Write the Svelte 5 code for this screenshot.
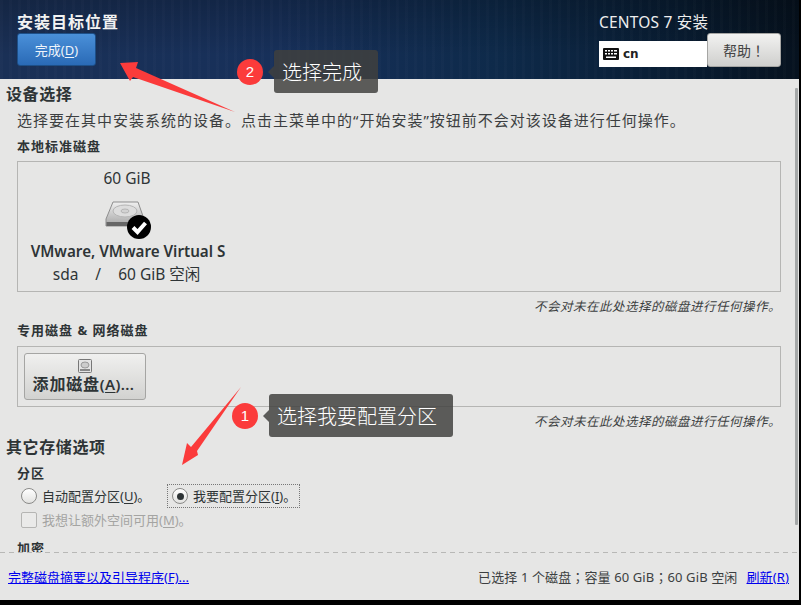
<script>
  const note = '不会对未在此处选择的磁盘进行任何操作。';
</script>

<div class="screen">
  <header class="top">
    <div class="top-left">
      <h1>安装目标位置</h1>
      <button class="done">完成(<u>D</u>)</button>
    </div>
    <div class="top-right">
      <div class="product">CENTOS 7 安装</div>
      <div class="kb-row">
        <div class="kb">
          <svg width="16" height="12" viewBox="0 0 16 12"><rect width="16" height="12" rx="1" fill="#111"/><g fill="#fff"><rect x="2" y="2" width="2" height="1.500"/><rect x="5" y="2" width="2" height="1.500"/><rect x="8" y="2" width="2" height="1.500"/><rect x="11" y="2" width="3" height="1.500"/><rect x="2" y="5" width="2" height="1.500"/><rect x="5" y="5" width="2" height="1.500"/><rect x="8" y="5" width="2" height="1.500"/><rect x="11" y="5" width="3" height="1.500"/><rect x="3" y="8.500" width="10" height="1.500"/></g></svg>
          <b>cn</b>
        </div>
        <button class="help">帮助！</button>
      </div>
    </div>
  </header>

  <main class="body">
    <h2 class="sec first">设备选择</h2>
    <div class="inner">
      <p class="intro">选择要在其中安装系统的设备。点击主菜单中的“开始安装”按钮前不会对该设备进行任何操作。</p>
      <h3 class="local">本地标准磁盘</h3>
      <div class="box disks">
        <div class="disk">
          <div class="size">60 GiB</div>
          <div class="disk-icon">
            <svg width="50" height="42" viewBox="0 0 50 42">
              <defs><linearGradient id="hd" x1="0" y1="0" x2="0" y2="1"><stop offset="0" stop-color="#f0f0f0"/><stop offset="1" stop-color="#a5a5a5"/></linearGradient></defs>
              <path d="M9 3H34L40 20V27H2V20Z" fill="url(#hd)" stroke="#8d8d8d"/>
              <ellipse cx="21" cy="12" rx="12" ry="6" fill="#ddd" stroke="#b5b5b5"/>
              <ellipse cx="21" cy="12" rx="4" ry="2" fill="#d2d2d2" stroke="#b5b5b5"/>
              <rect x="2.500" y="23" width="37" height="4" fill="#666"/>
              <circle cx="35" cy="28" r="12" fill="#000"/>
              <path d="M29 28.500L33.500 33 41.500 24" fill="none" stroke="#fff" stroke-width="4"/>
            </svg>
          </div>
          <div class="model">VMware, VMware Virtual S</div>
          <div class="meta"><span>sda</span><span>/</span><span>60 GiB 空闲</span></div>
        </div>
      </div>
      <p class="note">{note}</p>
      <h3 class="special">专用磁盘 &amp; 网络磁盘</h3>
      <div class="box add-box">
        <button class="add">
          <svg width="14" height="14" viewBox="0 0 14 14"><rect x=".5" y=".5" width="13" height="13" rx="1" fill="#e4e4e4" stroke="#777"/><ellipse cx="7" cy="6" rx="4" ry="3" fill="#ccc" stroke="#999"/><rect x="2" y="10" width="10" height="2" fill="#888"/></svg>
          <span class="add-label">添加磁盘<small>(<u>A</u>)...</small></span>
        </button>
      </div>
      <p class="note second">{note}</p>
    </div>
    <h2 class="sec other">其它存储选项</h2>
    <div class="inner">
      <h3 class="part">分区</h3>
      <div class="radios">
        <label class="radio"><i class="dot"></i>自动配置分区(<u>U</u>)。</label>
        <label class="radio picked"><i class="dot on"></i>我要配置分区(<u>I</u>)。</label>
      </div>
      <label class="check"><i class="cb"></i>我想让额外空间可用(<u>M</u>)。</label>
      <h3 class="enc">加密</h3>
    </div>
  </main>

  <footer class="foot">
    <a href="#a">完整磁盘摘要以及引导程序(F)...</a>
    <div class="summary">
      <span>已选择 1 个磁盘；容量 60 GiB；60 GiB 空闲</span>
      <a href="#b">刷新(R)</a>
    </div>
  </footer>

  <i class="scroll"></i>

  <svg class="arrows" width="801" height="605" viewBox="0 0 801 605">
    <path d="M120 63 L138 62 L136 68 L235 112 L133 77 L130 81Z" fill="#fb3b3b"/>
    <path d="M241 387 L197 451 L198 455 L182 465 L187 443 L191 447Z" fill="#fb3b3b"/>
  </svg>

  <div class="tip tip-two"><span class="num">2</span><span class="label">选择完成</span></div>
  <div class="tip tip-one"><span class="num">1</span><span class="label">选择我要配置分区</span></div>
</div>

<style>
  :global(body) { margin: 0; background: #000; }
  .screen {
    position: relative;
    width: 799px;
    height: 600px;
    background: #e6e6e5;
    display: flex;
    flex-direction: column;
    overflow: hidden;
    font-family: "Noto Sans", "Noto Sans CJK SC", sans-serif;
    color: #2e3436;
    font-size: 13px;
  }
  h1, h2, h3, p { margin: 0; }
  u { text-underline-offset: 2px; }
  button { font-family: inherit; padding: 0; cursor: default; }

  .top {
    height: 79px;
    flex: none;
    box-sizing: border-box;
    padding: 12px 18px 0 17px;
    display: flex;
    justify-content: space-between;
    background:
      repeating-linear-gradient(90deg, rgba(255, 255, 255, 0.015) 0 3px, transparent 3px 9px),
      linear-gradient(rgba(0, 0, 0, 0.22), rgba(0, 0, 0, 0) 70%),
      linear-gradient(90deg, #1a3056 0%, #17305a 35%, #0e2a4a 62%, #091d33 85%, #06121f 100%);
  }
  h1 { font-size: 16px; line-height: 20px; font-weight: 700; color: #f2f2f2; letter-spacing: 1px; }
  .done {
    display: block;
    width: 79px;
    height: 33px;
    margin-top: 1px;
    border: 1px solid #1d4f88;
    border-radius: 3px;
    background: linear-gradient(#4a90d9, #2a6ab6);
    color: #eef4fb;
    font-size: 13px;
  }
  .top-right { width: 182px; }
  .product { font-size: 15.500px; letter-spacing: 0.2px; line-height: 20px; color: #eee; }
  .kb-row { display: flex; margin-top: 9px; align-items: flex-start; }
  .kb {
    width: 108px;
    height: 26px;
    background: #fff;
    display: flex;
    align-items: center;
    gap: 4px;
    padding-left: 4px;
    box-sizing: border-box;
    color: #222;
    font-size: 12px;
    font-family: "DejaVu Sans", sans-serif;
  }
  .help {
    width: 74px;
    height: 34px;
    margin-top: -8px;
    border: 1px solid #a5a5a3;
    border-radius: 3px;
    background: linear-gradient(#f2f2f1, #cfcfcd);
    color: #444;
    font-size: 14px;
    font-family: "Noto Sans CJK TC", sans-serif;
  }

  .body { flex: 1; min-height: 0; overflow: hidden; padding-top: 4px; }
  .sec { font-size: 16px; line-height: 22px; font-weight: 700; padding-left: 6px; letter-spacing: 0.6px; }
  .inner { padding: 0 18px 0 17px; }
  .intro { font-size: 15px; letter-spacing: 1px; line-height: 20px; margin-top: 5px; color: #3c3f41; white-space: nowrap; }
  h3 { font-size: 13px; line-height: 18px; font-weight: 700; letter-spacing: 1px; }
  .local { margin-top: 7px; }
  .box { border: 1px solid #b5b5b3; box-sizing: border-box; }
  .disks { height: 131px; margin-top: 6px; }
  .disk { width: 220px; text-align: center; }
  .size { font-size: 15.500px; line-height: 20px; margin-top: 6px; margin-left: -2px; }
  .disk-icon { height: 42px; margin-top: 11px; }
  .disk-icon svg { display: block; position: relative; left: 86px; }
  .model { font-size: 15.200px; line-height: 20px; font-weight: 600; margin-top: 0; white-space: nowrap; }
  .meta { display: flex; justify-content: center; gap: 17px; font-size: 15.500px; line-height: 22px; margin-top: 2px; padding-right: 3px; }
  .note { text-align: right; font-style: italic; font-size: 12.500px; letter-spacing: 0.5px; line-height: 18px; margin-top: 6px; color: #3c3f41; }
  .special { margin-top: 5px; }
  .add-box { height: 61px; margin-top: 7px; padding: 6px; }
  .add {
    width: 122px;
    height: 47px;
    border: 1px solid #a5a5a3;
    border-radius: 3px;
    background: linear-gradient(#f0f0ef, #d2d2d0);
    color: #2e3436;
    display: flex;
    flex-direction: column;
    align-items: center;
  }
  .add svg { margin-top: 5px; }
  .add-label { font-size: 16px; font-weight: 600; letter-spacing: 0.8px; line-height: 20px; margin-top: 1px; margin-left: -3px; white-space: nowrap; }
  .add-label small { font-size: 15px; letter-spacing: 0.4px; }
  .second { margin-top: 6px; }
  .other { margin-top: 5px; }
  .part { margin-top: 6px; }
  .radios { display: flex; align-items: center; margin-top: 2px; margin-left: 4px; }
  .radio { display: flex; align-items: center; font-size: 13px; line-height: 18px; white-space: nowrap; }
  .radio:first-child { width: 146px; }
  .picked { border: 1px dotted #777; padding: 2px 0 2px 4px; box-sizing: border-box; height: 24px; width: 133px; }
  .dot { width: 16px; height: 16px; border-radius: 50%; border: 1px solid #8a8a88; background: linear-gradient(#fff, #e2e2e0); margin-right: 5px; box-sizing: border-box; position: relative; flex: none; }
  .dot.on::after { content: ""; position: absolute; left: 3.500px; top: 3.500px; width: 7px; height: 7px; border-radius: 50%; background: #2e3436; }
  .check { display: flex; align-items: center; font-size: 13px; line-height: 18px; color: #a4a4a2; margin: 3px 0 0 4px; }
  .cb { width: 16px; height: 16px; border: 1px solid #b5b5b3; border-radius: 2px; background: #eaeae9; margin-right: 5px; box-sizing: border-box; }
  .enc { margin-top: 10px; }

  .foot {
    height: 48px;
    flex: none;
    box-sizing: border-box;
    padding: 0 10px 0 8px;
    display: flex;
    justify-content: space-between;
    align-items: center;
    font-size: 13px;
    color: #3c3f41;
    background: repeating-linear-gradient(90deg, #b8b8b6 0 5px, transparent 5px 9px) top / 100% 1px no-repeat;
  }
  .foot a { color: #0000ee; text-decoration: underline; }
  .summary { display: flex; gap: 9px; font-family: "Noto Sans", "Noto Sans CJK TC", sans-serif; letter-spacing: 0.12px; }
  .summary a { font-family: "Noto Sans", "Noto Sans CJK SC", sans-serif; }

  .scroll { position: absolute; left: 795px; top: 88px; width: 3px; height: 437px; background: #a5a8a8; border-radius: 1px; }
  .arrows { position: absolute; left: 0; top: 0; pointer-events: none; }
  .tip { position: absolute; display: flex; align-items: center; }
  .num {
    width: 26px; height: 26px; border-radius: 50%;
    background: #fb3b3b; color: #fff;
    display: flex; align-items: center; justify-content: center;
    font-size: 15px;
    font-family: "Liberation Sans", sans-serif;
  }
  .label {
    position: relative;
    margin-left: 11px;
    height: 43px;
    border-radius: 3px;
    background: rgba(64, 64, 62, 0.84);
    color: #fff;
    font-size: 20px;
    line-height: 43px;
    font-family: "Noto Sans CJK SC", sans-serif;
    font-weight: 300;
    box-sizing: border-box;
    white-space: nowrap;
  }
  .label::before {
    content: ""; position: absolute; left: -6px; top: 50%; margin-top: -6px;
    border-style: solid; border-width: 6px 6px 6px 0;
    border-color: transparent rgba(64, 64, 62, 0.84) transparent transparent;
  }
  .tip-two { left: 237px; top: 50px; }
  .tip-two .label { width: 104px; padding-left: 8px; }
  .tip-one { left: 232px; top: 394px; }
  .tip-one .label { width: 184px; padding-left: 8px; }
</style>
